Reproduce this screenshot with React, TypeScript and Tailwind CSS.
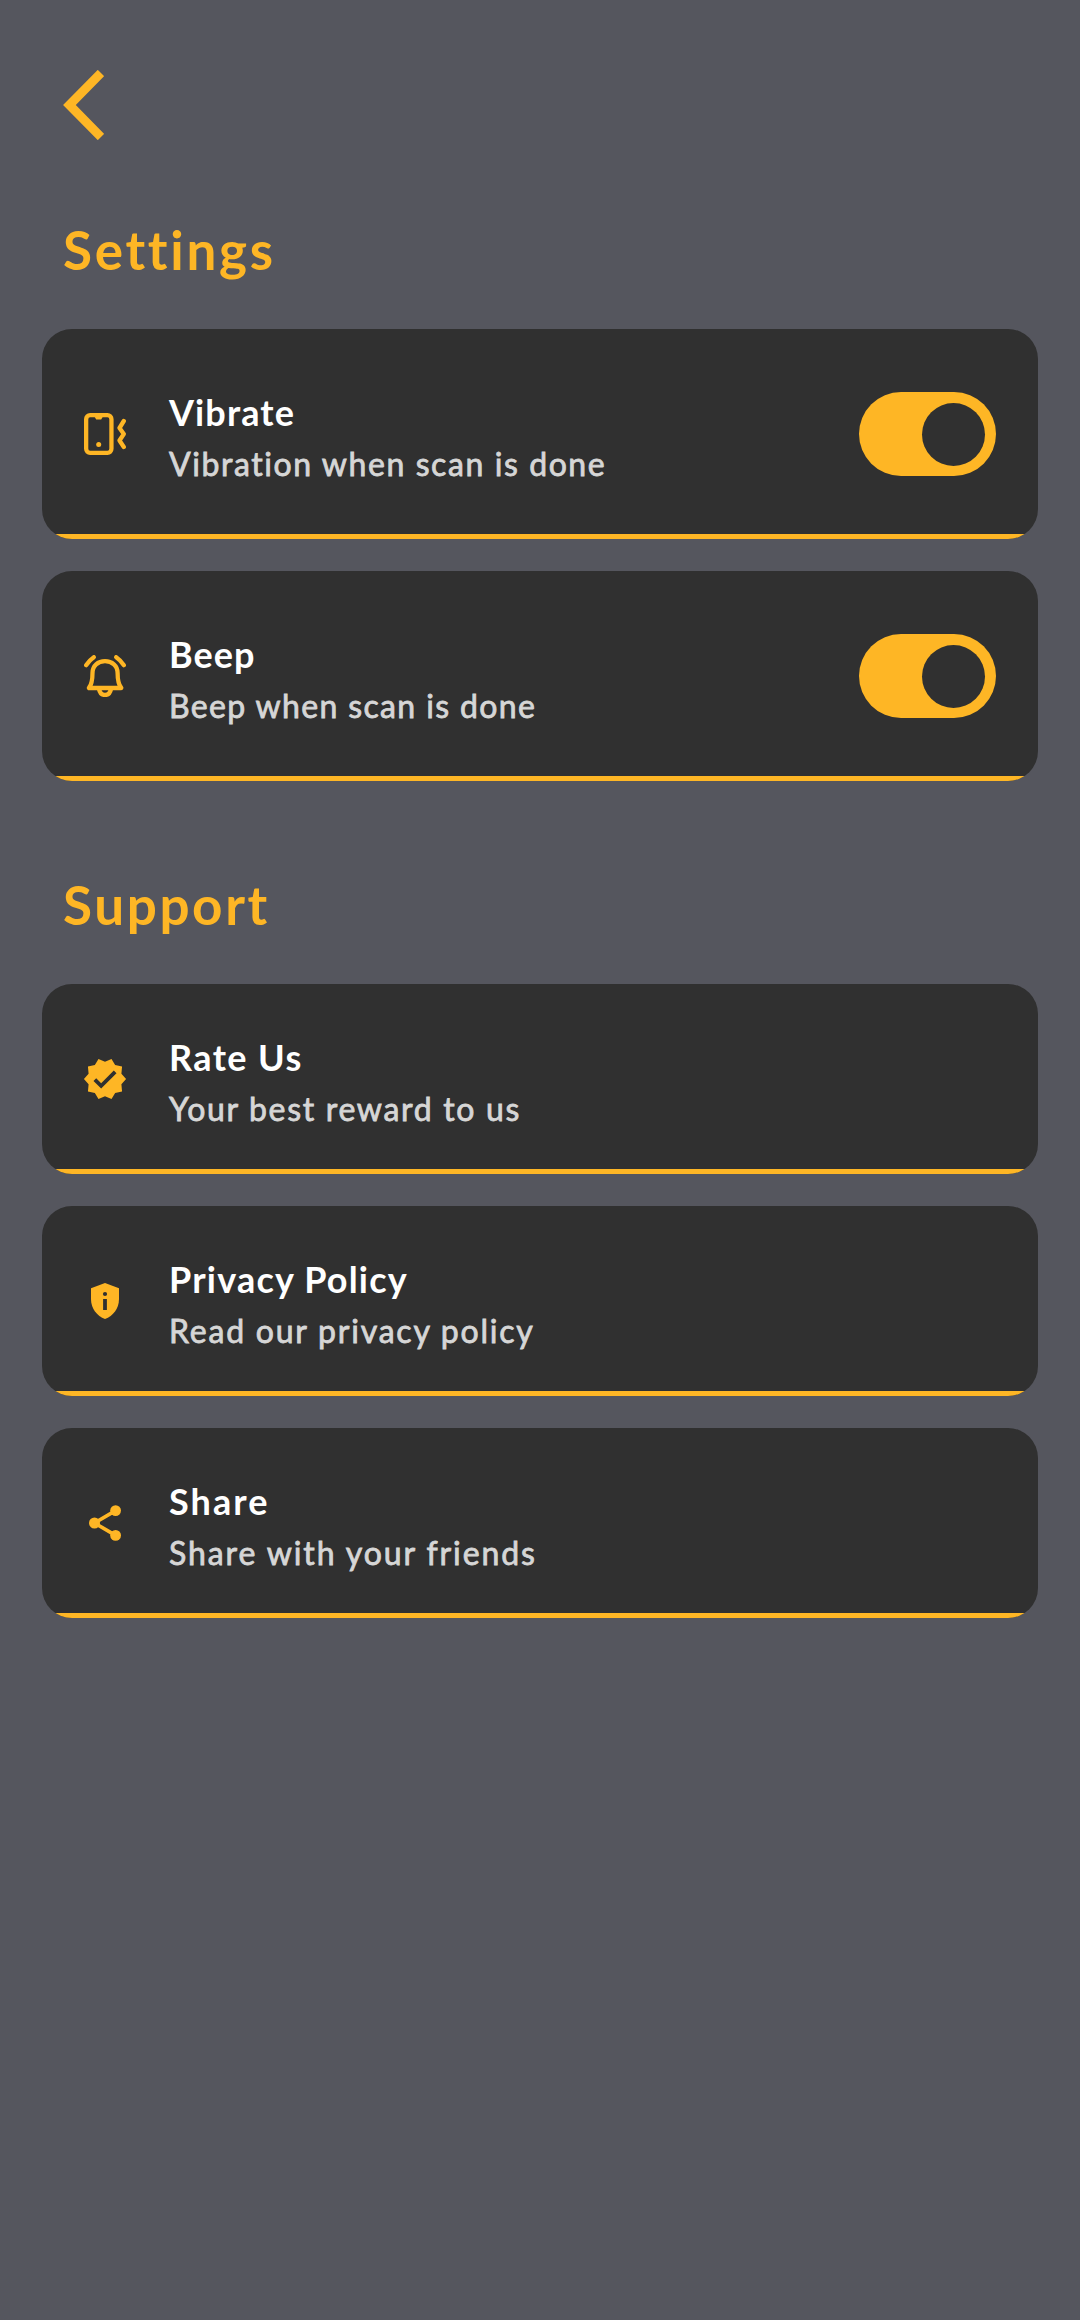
import type { ReactNode } from "react";

function VibrateIcon() {
  return (
    <svg className="size-[42px]" viewBox="0 0 42 42" fill="none" stroke="#feb625" strokeWidth="4.300" strokeLinecap="round" strokeLinejoin="round">
      <rect x="2.150" y="2.150" width="25.300" height="37.700" rx="4" />
      <path d="M10.500 3.500h8.400l-1.700 3h-5z" fill="#feb625" stroke="none" />
      <circle cx="14.700" cy="31.500" r="2.500" fill="#feb625" stroke="none" />
      <path d="M39.800 8l-4.300 7 4.300 6-4.300 6.500 4.300 6.500" />
    </svg>
  );
}

function BellIcon() {
  return (
    <svg className="size-[42px]" viewBox="0 0 42 42" fill="none" stroke="#feb625" strokeWidth="4.300" strokeLinecap="round" strokeLinejoin="round">
      <path d="M4.900 33h32.400c-2.500-3-3.700-7-3.700-15C33.600 10.500 28 6.200 21 6.200S8.500 10.500 8.500 18C8.500 26 7.400 30 4.900 33z" />
      <path d="M15 34c.8 4 3 6 6 6s5.200-2 6-6" />
      <path d="M2.200 10.200Q5 5.500 9.800 2.200M39.800 10.200Q37 5.500 32.200 2.200" />
    </svg>
  );
}

function VerifiedIcon() {
  return (
    <svg className="size-[46px]" viewBox="0 0 24 24" fill="#feb625">
      <path d="m23 12-2.440-2.780.34-3.680-3.610-.82-1.890-3.180L12 3 8.600 1.540 6.710 4.720l-3.610.81.34 3.680L1 12l2.440 2.780-.34 3.690 3.610.82 1.890 3.180L12 21l3.400 1.460 1.890-3.180 3.610-.82-.34-3.680zm-13 5-4-4 1.410-1.410L10 14.170l6.590-6.590L18 9z" />
    </svg>
  );
}

function ShieldIcon() {
  return (
    <svg className="h-[36px] w-[28px]" viewBox="0 0 28 36">
      <path d="M14 0 28 5.300V16c0 9.500-5.900 17-14 20C5.900 33 0 25.500 0 16V5.300z" fill="#feb625" />
      <circle cx="14" cy="11" r="2.100" fill="#303030" />
      <path d="M12.100 16h3.800v11h-3.800z" fill="#303030" />
    </svg>
  );
}

function ShareIcon() {
  return (
    <svg className="h-[36px] w-[32px]" viewBox="0 0 32 36" fill="#feb625">
      <path d="M26.600 5.600 5.500 18l21.100 12.400" fill="none" stroke="#feb625" strokeWidth="3.600" />
      <circle cx="26.600" cy="5.600" r="5.400" />
      <circle cx="5.500" cy="18" r="5.500" />
      <circle cx="26.600" cy="30.400" r="5.400" />
    </svg>
  );
}

function Toggle() {
  return (
    <button role="switch" aria-checked="true" className="mr-[42px] flex h-[84px] w-[137px] items-center justify-end rounded-full bg-[#feb625] pr-[11px]">
      <span className="size-[63px] rounded-full bg-[#303030]" />
    </button>
  );
}

type RowProps = {
  icon: ReactNode;
  title: string;
  titleClass: string;
  text: string;
  textClass: string;
  toggle?: boolean;
};

function Row({ icon, title, titleClass, text, textClass, toggle }: RowProps) {
  return (
    <section className={`${toggle ? "h-[210px]" : "h-[190px]"} flex flex-col overflow-hidden rounded-[30px] bg-[#303030]`}>
      <div className="flex flex-1 items-center pt-[5px]">
        <div className="flex w-[126px] shrink-0 justify-center">{icon}</div>
        <div className="flex-1 pt-[7px] pl-px whitespace-nowrap">
          <h2 className={`text-[36px] leading-[52px] font-bold text-white ${titleClass}`}>{title}</h2>
          <p className={`text-[32px] leading-[52px] text-[#d6d6d6] [-webkit-text-stroke:0.8px_#d6d6d6] ${textClass}`}>{text}</p>
        </div>
        {toggle && <Toggle />}
      </div>
      <div className="h-[5px] bg-[#feb625]" />
    </section>
  );
}

export default function App() {
  return (
    <main className="h-[2320px] w-[1080px] bg-[#55565e] px-[42px] pt-[70px] font-['Lato',sans-serif]">
      <button aria-label="Back" className="ml-[21px] block">
        <svg className="h-[70px] w-[41px]" viewBox="0 0 41 70" fill="none" stroke="#feb625" strokeWidth="9">
          <path d="M38 3 6.400 35l31.600 32" />
        </svg>
      </button>
      <h1 className="mt-[78px] ml-[21px] h-[111px] text-[53px] leading-[64px] font-bold tracking-[2.700px] text-[#feb625]">Settings</h1>
      <div className="flex flex-col gap-8">
        <Row toggle icon={<VibrateIcon />} title="Vibrate" titleClass="tracking-[1.100px]" text="Vibration when scan is done" textClass="tracking-[1.580px]" />
        <Row toggle icon={<BellIcon />} title="Beep" titleClass="tracking-[1px]" text="Beep when scan is done" textClass="tracking-[1.360px]" />
      </div>
      <h1 className="mt-[92px] ml-[21px] h-[111px] text-[53px] leading-[64px] font-bold tracking-[2.600px] text-[#feb625]">Support</h1>
      <div className="flex flex-col gap-8">
        <Row icon={<VerifiedIcon />} title="Rate Us" titleClass="tracking-[1.400px]" text="Your best reward to us" textClass="tracking-[1.680px]" />
        <Row icon={<ShieldIcon />} title="Privacy Policy" titleClass="tracking-[1.200px]" text="Read our privacy policy" textClass="tracking-[1.780px]" />
        <Row icon={<ShareIcon />} title="Share" titleClass="tracking-[2.100px]" text="Share with your friends" textClass="tracking-[1.900px]" />
      </div>
    </main>
  );
}
